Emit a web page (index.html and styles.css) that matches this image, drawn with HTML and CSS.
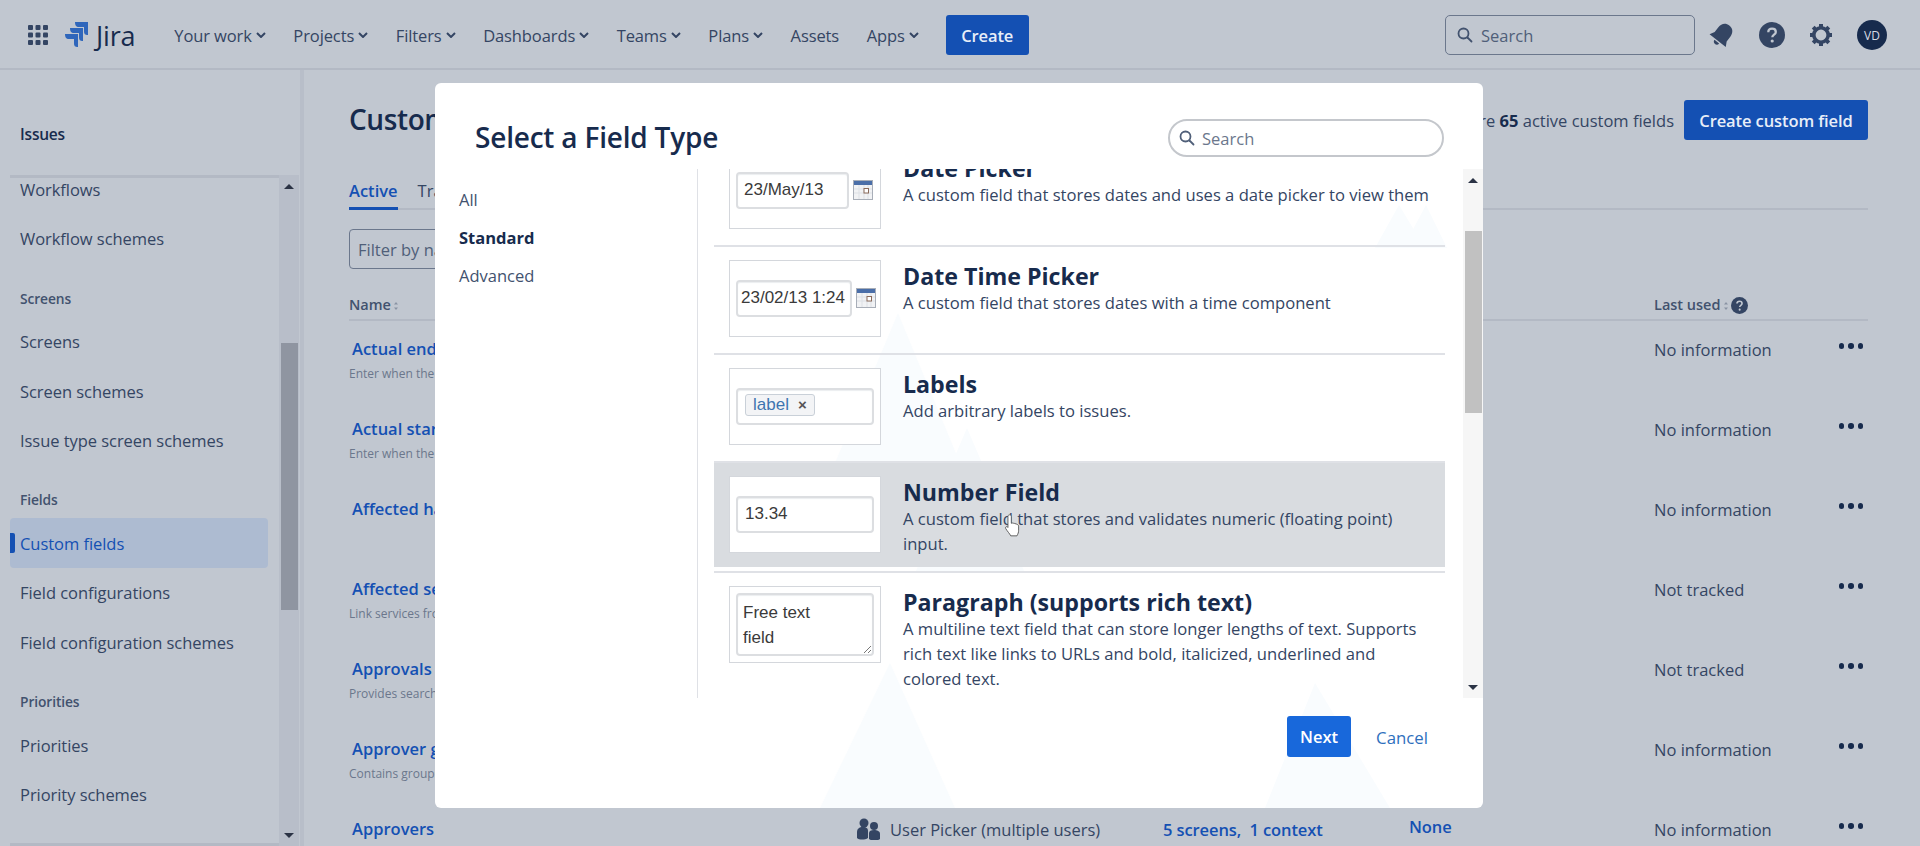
FILE: index.html
```html
<!DOCTYPE html>
<html lang="en">
<head>
<meta charset="utf-8">
<title>Custom fields</title>
<link rel="stylesheet" href="styles.css">
</head>
<body>
<header class="topbar">
  <svg class="apps" viewBox="0 0 20 20" width="20" height="20"><g fill="#344563"><rect x="0" y="0" width="5" height="5" rx="1"/><rect x="7.5" y="0" width="5" height="5" rx="1"/><rect x="15" y="0" width="5" height="5" rx="1"/><rect x="0" y="7.5" width="5" height="5" rx="1"/><rect x="7.5" y="7.5" width="5" height="5" rx="1"/><rect x="15" y="7.5" width="5" height="5" rx="1"/><rect x="0" y="15" width="5" height="5" rx="1"/><rect x="7.5" y="15" width="5" height="5" rx="1"/><rect x="15" y="15" width="5" height="5" rx="1"/></g></svg>
  <svg class="logo" viewBox="0 0 24 26" width="24" height="26"><g fill="#2f66bb"><path d="M10 0h13v13c-3 0-4-1-4-4V5h-5c-3 0-4-2-4-5z"/><path d="M5 6h13v13c-3 0-4-1-4-4v-4H9c-3 0-4-2-4-5z"/><path d="M0 12h13v13c-3 0-4-1-4-4v-4H4c-3 0-4-2-4-5z"/></g></svg>
  <span class="brand">Jira</span>
  <nav class="nav">
    <a class="nav-item">Your work<svg class="chev" viewBox="0 0 10 6"><path d="M1 1l4 4 4-4" /></svg></a>
    <a class="nav-item">Projects<svg class="chev" viewBox="0 0 10 6"><path d="M1 1l4 4 4-4" /></svg></a>
    <a class="nav-item">Filters<svg class="chev" viewBox="0 0 10 6"><path d="M1 1l4 4 4-4" /></svg></a>
    <a class="nav-item">Dashboards<svg class="chev" viewBox="0 0 10 6"><path d="M1 1l4 4 4-4" /></svg></a>
    <a class="nav-item">Teams<svg class="chev" viewBox="0 0 10 6"><path d="M1 1l4 4 4-4" /></svg></a>
    <a class="nav-item">Plans<svg class="chev" viewBox="0 0 10 6"><path d="M1 1l4 4 4-4" /></svg></a>
    <a class="nav-item">Assets</a>
    <a class="nav-item">Apps<svg class="chev" viewBox="0 0 10 6"><path d="M1 1l4 4 4-4" /></svg></a>
  </nav>
  <button class="btn-create">Create</button>
  <div class="top-right">
    <div class="global-search">
      <svg viewBox="0 0 16 16" width="16" height="16" class="search-ico"><circle cx="6.5" cy="6.5" r="5" fill="none" stroke="#42526e" stroke-width="1.8"/><path d="M10.5 10.5l4 4" stroke="#42526e" stroke-width="1.8" stroke-linecap="round"/></svg>
      <span>Search</span>
    </div>
    <svg class="t-ico bell" viewBox="0 0 24 24" width="26" height="26"><g transform="rotate(38 12 12)" fill="#344563"><path d="M12 1c-4.500 0-7 3.200-7 7.500v5.500l-2.500 4.500h19L19 14V8.500C19 4.200 16.500 1 12 1z"/><path d="M9.300 19.800h5.400c0 1.600-1.100 2.700-2.700 2.700s-2.700-1.100-2.700-2.700z"/></g></svg>
    <svg class="t-ico" viewBox="0 0 26 26" width="26" height="26"><circle cx="13" cy="13" r="13" fill="#344563"/><path d="M9.300 10.200c0-2.200 1.600-3.500 3.800-3.500s3.700 1.300 3.700 3.200c0 2.800-3.500 2.800-3.500 5.400" fill="none" stroke="#c1c7d0" stroke-width="2.300"/><circle cx="13.200" cy="19" r="1.600" fill="#c1c7d0"/></svg>
    <svg class="t-ico" viewBox="0 0 24 24" width="24" height="24"><circle cx="12" cy="12" r="7.200" fill="none" stroke="#344563" stroke-width="3.600"/><g stroke="#344563" stroke-width="4"><path d="M12 1v4M12 19v4M1 12h4M19 12h4M4.200 4.200l2.900 2.900M16.900 16.900l2.900 2.900M4.200 19.800l2.900-2.900M16.900 7.100l2.900-2.900"/></g></svg>
    <span class="avatar">VD</span>
  </div>
</header>

<div class="layout">
  <aside class="sidebar">
    <div class="side-title">Issues</div>
    <div class="side-scroll">
      <div class="side-list">
        <a class="side-item">Workflows</a>
        <a class="side-item">Workflow schemes</a>
        <div class="side-head">Screens</div>
        <a class="side-item">Screens</a>
        <a class="side-item">Screen schemes</a>
        <a class="side-item">Issue type screen schemes</a>
        <div class="side-head">Fields</div>
        <a class="side-item active">Custom fields</a>
        <a class="side-item">Field configurations</a>
        <a class="side-item">Field configuration schemes</a>
        <div class="side-head">Priorities</div>
        <a class="side-item">Priorities</a>
        <a class="side-item">Priority schemes</a>
      </div>
      <div class="side-bar">
        <span class="arrow up"></span>
        <span class="side-thumb"></span>
        <span class="arrow down"></span>
      </div>
    </div>
  </aside>

  <main class="main">
    <div class="page-head">
      <h1>Custom fields</h1>
      <div class="page-actions">
        <span class="count">There are <b>65</b> active custom fields</span>
        <button class="btn-primary">Create custom field</button>
      </div>
    </div>
    <div class="tabs"><span class="tab current">Active</span><span class="tab">Trash</span></div>
    <div class="filter">Filter by name</div>
    <div class="table">
      <div class="row thead"><span class="lu">Name<svg class="sort" viewBox="0 0 6 12" width="6" height="12"><path d="M3 2l2 2.500H1zM3 10l2-2.500H1z" fill="#8993a4"/></svg></span><span></span><span></span><span></span><span class="lu">Last used<svg class="sort" viewBox="0 0 6 12" width="6" height="12"><path d="M3 2l2 2.500H1zM3 10l2-2.500H1z" fill="#8993a4"/></svg><svg class="q" viewBox="0 0 18 18" width="17" height="17"><circle cx="9" cy="9" r="9" fill="#344563"/><path d="M6.300 7c0-1.500 1.100-2.500 2.700-2.500s2.700 1 2.700 2.300c0 2-2.500 2-2.500 3.800" fill="none" stroke="#c1c7d0" stroke-width="1.700"/><circle cx="9.200" cy="13.400" r="1.100" fill="#c1c7d0"/></svg></span></div>
      <div class="row"><div><a class="fname">Actual end</a><p class="fsub">Enter when the work actually ended</p></div><span></span><span></span><span></span><div class="lastcell"><span>No information</span><span class="dots"><i></i><i></i><i></i></span></div></div>
      <div class="row"><div><a class="fname">Actual start</a><p class="fsub">Enter when the work actually started</p></div><span></span><span></span><span></span><div class="lastcell"><span>No information</span><span class="dots"><i></i><i></i><i></i></span></div></div>
      <div class="row"><div><a class="fname">Affected hardware</a></div><span></span><span></span><span></span><div class="lastcell"><span>No information</span><span class="dots"><i></i><i></i><i></i></span></div></div>
      <div class="row"><div><a class="fname">Affected services</a><p class="fsub">Link services from your catalog</p></div><span></span><span></span><span></span><div class="lastcell"><span>Not tracked</span><span class="dots"><i></i><i></i><i></i></span></div></div>
      <div class="row"><div><a class="fname">Approvals</a><p class="fsub">Provides search options</p></div><span></span><span></span><span></span><div class="lastcell"><span>Not tracked</span><span class="dots"><i></i><i></i><i></i></span></div></div>
      <div class="row"><div><a class="fname">Approver groups</a><p class="fsub">Contains groups of approvers</p></div><span></span><span></span><span></span><div class="lastcell"><span>No information</span><span class="dots"><i></i><i></i><i></i></span></div></div>
      <div class="row"><div><a class="fname">Approvers</a></div><div class="type"><svg viewBox="0 0 24 22" width="24" height="22"><g fill="#344563"><circle cx="7" cy="5" r="4.500"/><circle cx="17" cy="8" r="4"/><path d="M0 20v-6c0-3 2-5 6-5s5 2 5 4v7c-3 2-9 2-11 0z"/><path d="M12 21v-6c0-2 2-3 5-3s6 1 6 4v5c-2 2-9 2-11 0z"/></g></svg>User Picker (multiple users)</div><a class="flink">5 screens,&nbsp; 1 context</a><a class="flink none">None</a><div class="lastcell"><span>No information</span><span class="dots"><i></i><i></i><i></i></span></div></div>
    </div>
  </main>
</div>

<section class="modal">
  <svg class="mountains" viewBox="0 0 1048 725" width="1048" height="725"><g fill="#f9fcfe"><polygon points="463,230 525,380 400,380"/><polygon points="532,345 590,480 474,480"/><polygon points="455,580 520,725 385,725"/><polygon points="535,367 590,490 480,490"/><polygon points="880,600 955,725 830,725"/><polygon points="964,122 990,165 940,165"/><polygon points="991,122 1012,165 968,165"/></g></svg>
  <div class="modal-head">
    <h2>Select a Field Type</h2>
    <div class="pill-search">
      <svg viewBox="0 0 16 16" width="16" height="16"><circle cx="6.500" cy="6.500" r="5" fill="none" stroke="#505f79" stroke-width="1.800"/><path d="M10.500 10.500l4 4" stroke="#505f79" stroke-width="1.800" stroke-linecap="round"/></svg>
      <span>Search</span>
    </div>
  </div>
  <div class="modal-body">
    <ul class="cats">
      <li>All</li>
      <li class="sel">Standard</li>
      <li>Advanced</li>
    </ul>
    <div class="types">
      <div class="types-list">
        <article class="ftype">
          <div class="thumb"><span class="fake-input date">23/May/13</span><svg class="cal" viewBox="0 0 20 20" width="20" height="20"><rect x=".5" y=".5" width="19" height="19" fill="#f1f2f4" stroke="#a8aeb8"/><rect x="1" y="1" width="18" height="4" fill="#4a6ea8"/><path d="M1 9h18M1 13h18M6 5v14M11 5v14M15 5v14" stroke="#dde0e5"/><rect x="11" y="8.500" width="4.500" height="4.500" fill="#fff" stroke="#8a6a5a"/></svg></div>
          <div class="ftext"><h3>Date Picker</h3><p>A custom field that stores dates and uses a date picker to view them</p></div>
        </article>
        <article class="ftype">
          <div class="thumb"><span class="fake-input datetime">23/02/13 1:24</span><svg class="cal" viewBox="0 0 20 20" width="20" height="20"><rect x=".5" y=".5" width="19" height="19" fill="#f1f2f4" stroke="#a8aeb8"/><rect x="1" y="1" width="18" height="4" fill="#4a6ea8"/><path d="M1 9h18M1 13h18M6 5v14M11 5v14M15 5v14" stroke="#dde0e5"/><rect x="11" y="8.500" width="4.500" height="4.500" fill="#fff" stroke="#8a6a5a"/></svg></div>
          <div class="ftext"><h3>Date Time Picker</h3><p>A custom field that stores dates with a time component</p></div>
        </article>
        <article class="ftype">
          <div class="thumb"><span class="fake-input wide"><span class="tag">label<b>×</b></span></span></div>
          <div class="ftext"><h3>Labels</h3><p>Add arbitrary labels to issues.</p></div>
        </article>
        <article class="ftype hover">
          <div class="thumb"><span class="fake-input wide">13.34</span></div>
          <div class="ftext"><h3>Number Field</h3><p>A custom field that stores and validates numeric (floating point) input.</p></div>
        </article>
        <article class="ftype">
          <div class="thumb"><span class="fake-input area">Free text<br>field<svg class="grip" viewBox="0 0 8 8" width="8" height="8"><path d="M1 8l7-7M5 8l3-3" stroke="#777" fill="none"/></svg></span></div>
          <div class="ftext"><h3>Paragraph (supports rich text)</h3><p>A multiline text field that can store longer lengths of text. Supports rich text like links to URLs and bold, italicized, underlined and colored text.</p></div>
        </article>
      </div>
    </div>
    <div class="m-scroll">
      <span class="arrow up dark"></span>
      <span class="m-thumb"></span>
      <span class="arrow down dark"></span>
    </div>
  </div>
  <div class="modal-foot">
    <button class="btn-next">Next</button>
    <a class="cancel">Cancel</a>
  </div>
  <svg class="cursor" viewBox="0 0 16 22" width="18" height="25"><path d="M5 1.500c1 0 1.500.7 1.500 1.500v6l1-.2 1 .2 1 .2 1.500.5c1.500.5 2 1 2 2.500v3c0 2-.5 3-1.500 5H6c-1-2-3-4-4.500-6.500-.7-1.200.7-2.300 1.800-1.300l.2.300V3c0-.8.500-1.500 1.500-1.500z" fill="#fff" stroke="#555" stroke-width=".8"/></svg>
</section>
</body>
</html>
```
FILE: styles.css
```css
* { box-sizing: border-box; }
html, body { margin: 0; height: 846px; overflow: hidden; }
body {
  background: #c1c7d0;
  color: #344563;
  font-family: "Open Sans", "Noto Sans", "Liberation Sans", sans-serif;
  font-size: 16.5px;
}
p, h1, h2, h3, ul { margin: 0; padding: 0; }
button { border: 0; font-family: inherit; }

/* top bar */
.topbar {
  height: 70px;
  border-bottom: 2px solid #b3b9c4;
  display: flex;
  align-items: center;
  padding: 2px 0 0 28px;
}
.apps { flex: none; }
.logo { margin-left: 17px; flex: none; }
.brand { margin-left: 7px; font-size: 27px; color: #172b4d; letter-spacing: -.2px; }
.nav { display: flex; margin-left: 39px; gap: 27.5px; }
.nav-item { display: flex; align-items: center; font-size: 16.5px; letter-spacing: -.1px; color: #344563; white-space: nowrap; }
.chev { width: 10px; height: 6px; margin-left: 4px; fill: none; stroke: #344563; stroke-width: 2; }
.btn-create {
  margin-left: 27px; width: 83px; height: 40px; border-radius: 3px;
  background: #1450b3; color: #e8eef8; font-size: 16.5px; font-weight: 600; letter-spacing: -.1px;
}
.top-right { margin-left: auto; display: flex; align-items: center; padding-right: 33px; }
.global-search {
  width: 250px; height: 40px; border: 1px solid #6b778c; border-radius: 5px;
  display: flex; align-items: center; color: #505f79; font-size: 16.5px; padding-left: 11px; gap: 8px;
}
.search-ico { flex: none; }
.t-ico { flex: none; margin-left: 24px; }
.global-search + .t-ico { margin-left: 14px; }
.avatar {
  margin-left: 24px; width: 30px; height: 30px; border-radius: 50%; background: #172b4d; color: #d7dce4;
  font-size: 12px; display: flex; align-items: center; justify-content: center;
}

.layout { display: flex; height: 776px; }

/* sidebar */
.sidebar { width: 304px; flex: none; border-right: 4px solid #b8bec9; display: flex; flex-direction: column; padding-left: 10px; }
.side-title { height: 105px; padding: 53px 0 0 10px; font-size: 15.5px; font-weight: 600; color: #172b4d; letter-spacing: -.2px; }
.side-scroll { flex: 1; display: flex; min-height: 0; position: relative; }
.side-list { width: 269px; padding-right: 11px; border-top: 3px solid #b3b9c4; border-bottom: 3px solid #b3b9c4; overflow: hidden; height: 671px; }
.side-item { display: flex; align-items: center; height: 49.6px; padding-left: 10px; font-size: 16.5px; letter-spacing: -.05px; color: #344563; position: relative; border-radius: 4px; white-space: nowrap; }
.side-item:first-child { margin-top: -13.5px; }
.side-head { padding: 25px 0 0 10px; height: 53px; font-size: 13.8px; font-weight: 600; color: #42526e; letter-spacing: -.1px; line-height: 20px; }
.side-item.active { background: #adbbd1; color: #1450b3; }
.side-item.active::before { content: ""; position: absolute; left: 0; top: 15px; width: 5px; height: 20px; background: #1450b3; border-radius: 0 2px 2px 0; }
.side-bar { width: 20px; background: #b8bec9; display: flex; flex-direction: column; align-items: center; position: relative; margin-left: 0; }
.side-thumb { position: absolute; top: 168px; left: 2px; width: 17px; height: 267px; background: #8f95a1; }
.arrow { width: 0; height: 0; border-left: 5px solid transparent; border-right: 5px solid transparent; position: absolute; left: 5px; }
.arrow.up { top: 9px; border-bottom: 5px solid #2b3345; }
.arrow.down { bottom: 8px; border-top: 5px solid #2b3345; }

/* main */
.main { flex: 1; padding: 0 52px 0 45px; min-width: 0; }
.page-head { display: flex; justify-content: space-between; align-items: flex-start; padding-top: 30px; height: 106px; }
h1 { font-size: 28px; font-weight: 600; color: #172b4d; letter-spacing: -.4px; line-height: 38px; }
.page-actions { display: flex; align-items: center; gap: 10px; }
.count { font-size: 16.5px; color: #344563; }
.count b { color: #172b4d; }
.btn-primary { width: 184px; height: 40px; border-radius: 3px; background: #1450b3; color: #e8eef8; font-size: 16.5px; font-weight: 600; letter-spacing: -.1px; }
.tabs { display: flex; gap: 20px; height: 34px; padding-top: 3px; border-bottom: 2px solid #b3b9c4; font-size: 16.5px; color: #344563; }
.tab.current { color: #1450b3; font-weight: 600; border-bottom: 3px solid #1450b3; height: 31px; line-height: 24px; }
.tab { line-height: 24px; }
.filter { margin-top: 19px; width: 200px; height: 40px; border: 1px solid #6b778c; border-radius: 4px; color: #505f79; padding: 8px 8px; }
.table { margin-top: 21px; }
.row { display: grid; grid-template-columns: 508px 306px 246px 245px 214px; height: 80px; font-size: 16.5px; padding-top: 17px; }
.row.thead { height: 31px; padding-top: 5px; border-bottom: 2px solid #b3b9c4; font-size: 14.5px; font-weight: 600; color: #42526e; }
.thead .lu { display: flex; align-items: flex-start; gap: 2px; }
.thead .sort { margin-top: 5px; }
.thead .q { margin-top: 2px; }
.fname { display: block; margin-left: 3px; color: #1450b3; font-weight: 600; margin-top: -1px; white-space: nowrap; }
.fsub { font-size: 12px; color: #6b778c; margin-top: 5px; white-space: nowrap; }
.type { display: flex; align-items: flex-start; gap: 9px; color: #344563; white-space: nowrap; }
.flink { color: #1450b3; font-weight: 600; letter-spacing: -.1px; white-space: nowrap; }
.none { margin-top: -3px; }
.lastcell { display: flex; justify-content: space-between; color: #344563; padding-right: 5px; }
.dots { display: flex; gap: 4px; margin-top: 5px; height: 6px; }
.dots i { width: 5.5px; height: 5.5px; border-radius: 50%; background: #172b4d; }

/* modal */
.modal {
  position: absolute; left: 435px; top: 83px; width: 1048px; height: 725px;
  background: #fff; border-radius: 6px; overflow: hidden;
}
.mountains { position: absolute; left: 0; top: 0; }
.modal-head { position: relative; height: 86px; padding: 36px 39px 0 40px; display: flex; justify-content: space-between; align-items: flex-start; }
h2 { font-size: 28px; font-weight: 600; color: #172b4d; letter-spacing: -.2px; line-height: 36px; }
.pill-search {
  width: 276px; height: 38px; border-radius: 19px; border: 2px solid #c4c7cc;
  display: flex; align-items: center; gap: 7px; padding-left: 9px; color: #6b778c; font-size: 16.5px;
}
.modal-body { position: relative; height: 529px; display: flex; }
.cats { list-style: none; width: 263px; border-right: 1px solid #dfe1e6; padding: 19px 0 0 24px; flex: none; font-size: 16.5px; color: #42526e; }
.cats li { height: 38px; line-height: 24px; }
.cats .sel { font-weight: 700; color: #172b4d; }
.types { width: 731px; margin-left: 16px; overflow: hidden; flex: none; }
.types-list { margin-top: -31px; }
.ftype { display: flex; min-height: 103px; padding: 14px 12px 11px 15px; position: relative; margin-bottom: 5px; }
.ftype::before { content: ""; position: absolute; left: 0; right: 0; top: -1px; height: 2px; background: #dfe1e6; }
.ftype.hover { background: #d9dce0; }
.thumb { width: 152px; height: 77px; flex: none; border: 1px solid #d4d7dc; background: #fff; display: flex; align-items: center; padding-left: 6px; gap: 5px; }
.fake-input {
  display: block; height: 37px; border: 2px solid #dcdee1; border-radius: 4px; background: #fff; box-shadow: inset 0 1px 1px #eceef0;
  font-family: "Liberation Sans", Arial, sans-serif; font-size: 17px; color: #3a3a3a; line-height: 32px; white-space: nowrap; position: relative;
}
.fake-input.date { width: 113px; padding-left: 6px; }
.fake-input.datetime { width: 116px; padding-left: 3px; }
.fake-input.wide { width: 138px; padding-left: 7px; }
.fake-input.area { width: 138px; height: 63px; line-height: 25px; padding: 5px 5px; }
.grip { position: absolute; right: 1px; bottom: 1px; }
.cal { flex: none; margin-left: -1px; margin-top: -1px; }
.tag { display: inline-flex; align-items: center; height: 22px; margin-top: 4px; padding: 0 7px; background: #f3f4f6; border: 1px solid #c9d0d8; border-radius: 3px; color: #3e74b0; line-height: 20px; vertical-align: top; }
.tag b { margin-left: 9px; color: #555; font-size: 15px; }
.ftext { margin-left: 22px; width: 536px; position: relative; }
h3 { font-size: 23.2px; font-weight: 700; color: #172b4d; line-height: 28px; margin-top: 2px; }
.ftext p { font-size: 16.6px; color: #344563; line-height: 25px; }
.m-scroll { position: absolute; right: 0; top: 0; bottom: 0; width: 20px; background: #f6f6f6; }
.m-thumb { position: absolute; top: 62px; left: 2px; width: 17px; height: 182px; background: #c1c1c1; }
.modal-foot { position: relative; display: flex; justify-content: flex-end; align-items: flex-start; padding: 18px 55px 0 0; gap: 25px; }
.btn-next { width: 64px; height: 41px; border-radius: 3px; background: #1868db; color: #fff; font-size: 16.5px; font-weight: 600; }
.cancel { color: #2e6fbd; font-size: 16.8px; line-height: 43px; }
.cursor { position: absolute; left: 569px; top: 430px; }
```
